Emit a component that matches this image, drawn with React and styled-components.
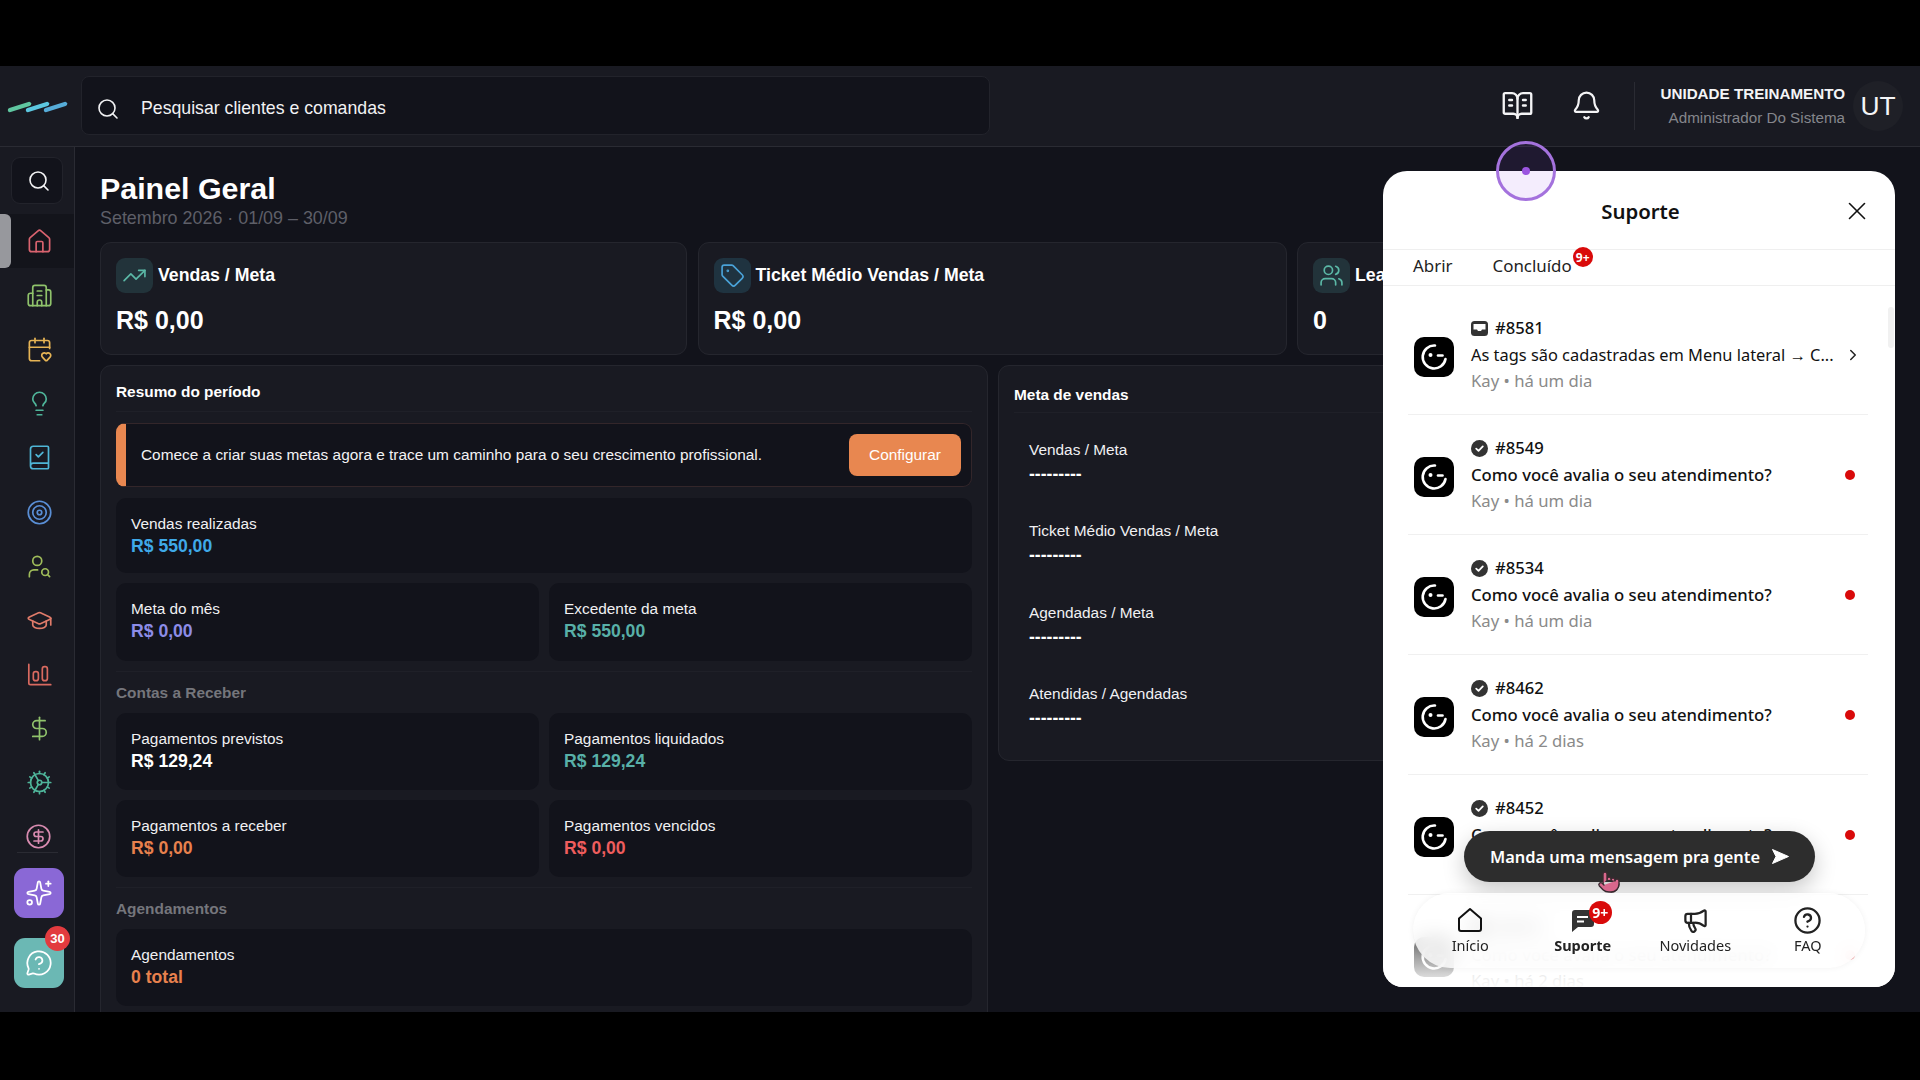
import React from "react";
import styled, { createGlobalStyle } from "styled-components";
import {
  House,
  Building2,
  CalendarHeart,
  Lightbulb,
  BookCheck,
  Target,
  UserSearch,
  GraduationCap,
  DollarSign,
  Cog,
  CircleDollarSign,
  Sparkles,
  MessageCircleQuestion,
  Search,
  BookOpenText,
  Bell,
  TrendingUp,
  Tag,
  Users,
  X,
  ChevronRight,
  Megaphone,
  CircleHelp,
  Pointer,
} from "lucide-react";

const GlobalStyle = createGlobalStyle`
  html, body {
    margin: 0;
    padding: 0;
    height: 100%;
    background: #000;
    overflow: hidden;
    font-family: "Liberation Sans", Arial, sans-serif;
  }
  * { box-sizing: border-box; }
`;

const Frame = styled.div`
  width: 1920px;
  height: 1080px;
  padding: 66px 0 68px;
  background: #000;
  position: relative;
  overflow: hidden;
`;

const Shell = styled.div`
  height: 946px;
  display: flex;
  flex-direction: column;
  background: #12131b;
  color: #f4f4f6;
  overflow: hidden;
`;

const Header = styled.header`
  height: 81px;
  flex: none;
  display: flex;
  align-items: center;
  background: #191a22;
  border-bottom: 1px solid #2a2b33;
`;

const LogoBox = styled.div`
  width: 81px;
  flex: none;
  padding-left: 6px;
  display: flex;
`;

const SearchBar = styled.div`
  width: 909px;
  height: 59px;
  margin-top: -2px;
  display: flex;
  align-items: center;
  gap: 21px;
  padding: 7px 0 0 14px;
  background: #12131b;
  border: 1px solid #22232b;
  border-radius: 8px;
  font-size: 17.7px;
  color: #f2f2f4;
`;

const HeaderActions = styled.div`
  margin-left: auto;
  display: flex;
  align-items: center;
  padding-right: 17px;
`;

const ActionIcon = styled.div`
  width: 69px;
  display: flex;
  justify-content: center;
  margin-top: -2px;
  padding-left: 2px;
  color: #f4f4f6;
`;

const HeaderDivider = styled.div`
  width: 1px;
  height: 48px;
  margin: 0 25px 0 14px;
  background: #2a2b33;
`;

const UserInfo = styled.div`
  text-align: right;
  margin-right: 8px;
`;

const UserName = styled.div`
  font-size: 15.2px;
  font-weight: 700;
  line-height: 24px;
`;

const UserRole = styled.div`
  font-size: 15.2px;
  line-height: 24px;
  color: #85868c;
`;

const Avatar = styled.div`
  width: 50px;
  height: 50px;
  border-radius: 50%;
  background: #1f2027;
  display: flex;
  align-items: center;
  justify-content: center;
  font-size: 26.4px;
`;

const Body = styled.div`
  flex: 1;
  display: flex;
  min-height: 0;
`;

const Sidebar = styled.aside`
  width: 75px;
  flex: none;
  background: #191a22;
  border-right: 1px solid #2a2b33;
  padding-top: 10px;
  display: flex;
  flex-direction: column;
`;

const SideSearch = styled.div`
  width: 52px;
  height: 47px;
  margin: 0 0 10px 11px;
  border-radius: 9px;
  border: 1px solid #22232b;
  background: #12131b;
  display: flex;
  align-items: center;
  justify-content: center;
  padding-left: 4px;
  color: #f4f4f6;
`;

const NavItem = styled.div`
  height: ${(p) => (p.$last ? "43px" : "54.2px")};
  position: relative;
  display: flex;
  align-items: center;
  justify-content: center;
  padding-left: 5px;
  padding-top: ${(p) => (p.$last ? "10px" : "0")};
  color: ${(p) => p.$color};
  background: ${(p) => (p.$active ? "#13141b" : "transparent")};
  ${(p) => (p.$last ? "border-bottom: 1px solid #2a2b33; margin: 0 16px 0 17px; padding-left: 2px;" : "")}
  ${(p) =>
    p.$active
      ? `&::before {
          content: "";
          position: absolute;
          left: 0;
          top: 0;
          bottom: 0;
          width: 11px;
          border-radius: 0 6px 6px 0;
          background: #97989d;
        }`
      : ""}
`;

const SideButton = styled.div`
  width: 50px;
  height: 50px;
  margin: ${(p) => p.$margin};
  position: relative;
  border-radius: 11px;
  background: ${(p) => p.$bg};
  display: flex;
  align-items: center;
  justify-content: center;
  color: #fff;
`;

const CountBadge = styled.span`
  position: absolute;
  top: -12px;
  right: -6px;
  width: 25px;
  height: 25px;
  border-radius: 50%;
  background: #e23b3f;
  color: #fff;
  font-size: 13px;
  font-weight: 700;
  display: flex;
  align-items: center;
  justify-content: center;
`;

const Main = styled.main`
  flex: 1;
  min-width: 0;
  padding: 23px 34px 0 25px;
  overflow: hidden;
`;

const Title = styled.h1`
  margin: 0;
  font-size: 30.4px;
  line-height: 37px;
  font-weight: 700;
  color: #fff;
`;

const Subtitle = styled.div`
  font-size: 17.9px;
  line-height: 22px;
  color: #5e5f68;
  margin-bottom: 13px;
`;

const KpiGrid = styled.div`
  display: grid;
  grid-template-columns: 587px 589px 1fr;
  gap: 10.5px;
  margin-bottom: 10px;
`;

const KpiCard = styled.div`
  height: 113px;
  padding: 15px;
  background: #191a22;
  border: 1px solid #25262e;
  border-radius: 11px;
`;

const KpiHead = styled.div`
  display: flex;
  align-items: center;
  gap: 5px;
  font-size: 17.7px;
  font-weight: 700;
  color: #fff;
`;

const KpiIcon = styled.div`
  width: 37px;
  height: 35px;
  border-radius: 9px;
  display: flex;
  align-items: center;
  justify-content: center;
  background: ${(p) => p.$bg};
  color: ${(p) => p.$color};
`;

const KpiValue = styled.div`
  margin-top: 12px;
  font-size: 25px;
  line-height: 30px;
  font-weight: 700;
  color: #fff;
`;

const Columns = styled.div`
  display: grid;
  grid-template-columns: 1fr 1fr;
  gap: 10px;
  align-items: start;
`;

const Panel = styled.section`
  padding: 0 15px;
  background: #191a22;
  border: 1px solid #25262e;
  border-radius: 11px;
`;

const LeftPanel = styled(Panel)`
  height: 720px;
`;

const MetaPanel = styled(Panel)`
  height: 396px;
`;

const PanelTitle = styled.div`
  padding: ${(p) => (p.$low ? "19px 0 7px" : "16px 0 9px")};
  font-size: 15.4px;
  line-height: 20px;
  font-weight: 700;
  color: #fff;
  border-bottom: 1px solid #1f2028;
`;

const Banner = styled.div`
  height: 64px;
  margin: 11px 0;
  display: flex;
  align-items: center;
  justify-content: space-between;
  padding: 0 10px 0 15px;
  background: #12131b;
  border: 1px solid #33262a;
  border-left: 10px solid #e88750;
  border-radius: 9px;
  font-size: 15.4px;
  color: #f2f2f4;
`;

const ConfigButton = styled.div`
  width: 112px;
  height: 42px;
  border-radius: 8px;
  background: #e88750;
  color: #fff;
  font-size: 15.4px;
  display: flex;
  align-items: center;
  justify-content: center;
`;

const StatRow = styled.div`
  display: grid;
  grid-template-columns: ${(p) => (p.$single ? "1fr" : "1fr 1fr")};
  gap: 10px;
  margin-bottom: 10px;
`;

const StatCard = styled.div`
  height: ${(p) => p.$height || "77px"};
  padding: 14px 15px 0;
  background: #12131b;
  border-radius: 10px;
`;

const StatLabel = styled.div`
  font-size: 15.4px;
  line-height: 23px;
  color: #f0f0f2;
`;

const StatValue = styled.div`
  font-size: 17.6px;
  line-height: 23px;
  font-weight: 700;
  color: ${(p) => p.$color};
`;

const SectionLabel = styled.div`
  padding: 10px 0 10px;
  border-top: 1px solid #1f2028;
  font-size: 15.4px;
  line-height: 21px;
  font-weight: 700;
  color: #75767c;
`;

const MetaList = styled.div`
  padding: 26px 0 0 15px;
`;

const MetaItem = styled.div`
  height: 81.4px;
  font-size: 15.4px;
  line-height: 22px;
  color: #f0f0f2;
`;

const MetaDashes = styled.div`
  font-size: 17.6px;
  line-height: 26px;
  font-weight: 700;
  color: #fff;
`;

const Widget = styled.div`
  position: absolute;
  left: 1383px;
  top: 171px;
  width: 512px;
  height: 816px;
  background: #fff;
  border-radius: 24px 24px 20px 20px;
  overflow: hidden;
  color: #111;
  font-family: "Noto Sans", "Open Sans", sans-serif;
`;

const WidgetHead = styled.div`
  height: 79px;
  display: flex;
  align-items: center;
  justify-content: center;
  position: relative;
  padding: 2px 0 0 3px;
  font-size: 20.4px;
  font-weight: 600;
  border-bottom: 1px solid #efefef;
`;

const CloseIcon = styled.div`
  position: absolute;
  right: 23px;
  top: 25px;
  display: flex;
  color: #111;
`;

const Tabs = styled.div`
  height: 36px;
  display: flex;
  align-items: center;
  padding: 0 0 4px 30px;
  gap: 40px;
  font-size: 16.9px;
  color: #222;
  border-bottom: 1px solid #efefef;
`;

const TabLabel = styled.span`
  position: relative;
`;

const RedBadge = styled.span`
  position: absolute;
  width: ${(p) => p.$size}px;
  height: ${(p) => p.$size}px;
  right: ${(p) => p.$right}px;
  top: ${(p) => p.$top}px;
  border-radius: 50%;
  background: #d90a0a;
  color: #fff;
  font-size: ${(p) => p.$font}px;
  font-weight: 700;
  display: flex;
  align-items: center;
  justify-content: center;
`;

const TicketList = styled.div`
  padding: 9px 27px 0 25px;
`;

const TicketRow = styled.div`
  height: 120px;
  display: flex;
  align-items: center;
  padding: 0 13px 0 6px;
  border-bottom: 1px solid #f0f0f0;
`;

const TicketLogo = styled.svg`
  flex: none;
  width: 40px;
  height: 40px;
  margin-top: 5px;
`;

const TicketText = styled.div`
  flex: 1;
  min-width: 0;
  margin-left: 17px;
  padding-top: 1px;
`;

const TicketId = styled.div`
  display: flex;
  align-items: center;
  gap: 7px;
  font-size: 16.6px;
  line-height: 26.5px;
  font-weight: 500;
  color: #111;
`;

const TicketTitle = styled.div`
  font-size: ${(p) => (p.$unread ? "16.7px" : "16.4px")};
  line-height: 26.5px;
  font-weight: ${(p) => (p.$unread ? 500 : 400)};
  color: #111;
  white-space: nowrap;
`;

const TicketMeta = styled.div`
  font-size: 16.7px;
  line-height: 26.5px;
  color: #8a8a8a;
`;

const UnreadDot = styled.span`
  flex: none;
  width: 10px;
  height: 10px;
  border-radius: 50%;
  background: #d90a0a;
`;

const Chevron = styled.div`
  flex: none;
  display: flex;
  margin-right: -7px;
  color: #222;
`;

const Scrollbar = styled.div`
  position: absolute;
  right: 1px;
  top: 136px;
  width: 6px;
  height: 41px;
  border-radius: 3px;
  background: #f1f1f1;
`;

const BottomFade = styled.div`
  position: absolute;
  left: 0;
  right: 0;
  bottom: 0;
  height: 60px;
  background: linear-gradient(to bottom, rgba(255, 255, 255, 0.3), rgba(255, 255, 255, 0.97));
`;

const MessagePill = styled.div`
  position: absolute;
  left: 81px;
  top: 660px;
  width: 351px;
  height: 51px;
  border-radius: 26px;
  background: #2d2d2d;
  color: #fff;
  font-size: 16.4px;
  font-weight: 600;
  display: flex;
  align-items: center;
  justify-content: center;
  gap: 12px;
  box-shadow: 0 8px 22px rgba(0, 0, 0, 0.22);
`;

const BottomNav = styled.div`
  position: absolute;
  left: 30px;
  top: 722px;
  width: 452px;
  height: 75px;
  border-radius: 38px;
  display: grid;
  grid-template-columns: repeat(4, 1fr);
  padding: 0 1px;
  background: rgba(255, 255, 255, 0.78);
  backdrop-filter: blur(10px);
  box-shadow: 0 0 6px rgba(0, 0, 0, 0.06);
`;

const BottomTab = styled.div`
  display: flex;
  flex-direction: column;
  align-items: center;
  padding-top: 13px;
  font-size: 14.5px;
  line-height: 22px;
  font-weight: ${(p) => (p.$active ? 700 : 400)};
  color: #222;
`;

const BottomIcon = styled.div`
  position: relative;
  height: 28px;
  display: flex;
  align-items: center;
  justify-content: center;
`;

const ClickRing = styled.div`
  position: absolute;
  left: 1496px;
  top: 141px;
  width: 60px;
  height: 60px;
  border-radius: 50%;
  border: 3px solid #a472dd;
  background: rgba(150, 80, 240, 0.1);
  display: flex;
  align-items: center;
  justify-content: center;

  &::after {
    content: "";
    width: 8px;
    height: 8px;
    border-radius: 50%;
    background: #9b55e0;
  }
`;

const HandCursor = styled.div`
  position: absolute;
  left: 1597px;
  top: 870px;
  display: flex;
`;

const BarsIcon = ({ size, strokeWidth }) => (
  <svg width={size} height={size} viewBox="0 0 24 24" fill="none" stroke="currentColor" strokeWidth={strokeWidth} strokeLinecap="round" strokeLinejoin="round">
    <path d="M2.5 3 V19.5 a1.5 1.5 0 0 0 1.5 1.5 H22" />
    <rect x="6.5" y="9.5" width="4.5" height="8" rx="2" />
    <rect x="14.5" y="5" width="4.5" height="12.5" rx="2" />
  </svg>
);

const navIcons = [
  { name: "home", Icon: House, color: "#d9636f", active: true },
  { name: "units", Icon: Building2, color: "#8fc26b" },
  { name: "agenda", Icon: CalendarHeart, color: "#e6b455" },
  { name: "ideas", Icon: Lightbulb, color: "#4fb59a" },
  { name: "book", Icon: BookCheck, color: "#4fb6d6" },
  { name: "goals", Icon: Target, color: "#5a8fd6" },
  { name: "clients", Icon: UserSearch, color: "#9fbc5a" },
  { name: "training", Icon: GraduationCap, color: "#e07b6a" },
  { name: "reports", Icon: BarsIcon, color: "#d96a60" },
  { name: "finance", Icon: DollarSign, color: "#8fc26b" },
  { name: "settings", Icon: Cog, color: "#4fb59a" },
  { name: "billing", Icon: CircleDollarSign, color: "#d88bb0", last: true },
];

const kpis = [
  { Icon: TrendingUp, color: "#5bb8a6", bg: "#22333a", title: "Vendas / Meta", value: "R$ 0,00" },
  { Icon: Tag, color: "#4aa3d8", bg: "#1f3340", title: "Ticket Médio Vendas / Meta", value: "R$ 0,00" },
  { Icon: Users, color: "#5bb8a6", bg: "#22333a", title: "Leads / Meta", value: "0" },
];

const metas = ["Vendas / Meta", "Ticket Médio Vendas / Meta", "Agendadas / Meta", "Atendidas / Agendadas"];

const tickets = [
  { id: "#8581", title: "As tags são cadastradas em Menu lateral → C...", meta: "Kay • há um dia", open: true },
  { id: "#8549", title: "Como você avalia o seu atendimento?", meta: "Kay • há um dia" },
  { id: "#8534", title: "Como você avalia o seu atendimento?", meta: "Kay • há um dia" },
  { id: "#8462", title: "Como você avalia o seu atendimento?", meta: "Kay • há 2 dias" },
  { id: "#8452", title: "Como você avalia o seu atendimento?", meta: "Kay • há 2 dias" },
  { id: "#8441", title: "Como você avalia o seu atendimento?", meta: "Kay • há 2 dias" },
];

const Logo = () => (
  <svg width="62" height="16" viewBox="0 0 62 16">
    <g strokeWidth="4.4" strokeLinecap="round">
      <path d="M4 12 L23 6" stroke="#5fc6a0" />
      <path d="M22 12 L41 6" stroke="#5cc7e0" />
      <path d="M40 12 L59 6" stroke="#56acd8" />
    </g>
  </svg>
);

const KayLogo = () => (
  <TicketLogo viewBox="0 0 40 40">
    <rect width="40" height="40" rx="10" fill="#000" />
    <path d="M21 8.5 A11.5 11.5 0 1 0 31.5 22" fill="none" stroke="#fff" strokeWidth="2.6" strokeLinecap="round" />
    <circle cx="16.5" cy="18" r="2" fill="#fff" />
    <path d="M24 18.5 H28.5" stroke="#fff" strokeWidth="2.6" strokeLinecap="round" />
  </TicketLogo>
);

const InboxGlyph = () => (
  <svg width="17" height="15" viewBox="0 0 17 15">
    <rect x="0" y="0" width="17" height="15" rx="3.5" fill="#333" />
    <path d="M2.5 3 H14.5 V8.5 H11 L10 10 H7 L6 8.5 H2.5 Z" fill="#fff" />
  </svg>
);

const CheckGlyph = () => (
  <svg width="17" height="17" viewBox="0 0 17 17">
    <circle cx="8.5" cy="8.5" r="8.5" fill="#333" />
    <path d="M5.2 8.7 L7.5 10.8 L11.8 6.4" fill="none" stroke="#fff" strokeWidth="1.8" strokeLinecap="round" strokeLinejoin="round" />
  </svg>
);

const HomeGlyph = () => (
  <svg width="26" height="26" viewBox="0 0 26 26">
    <path d="M2 11.5 L13 2 L24 11.5 V22 a2 2 0 0 1 -2 2 H4 a2 2 0 0 1 -2 -2 Z" fill="none" stroke="#111" strokeWidth="2" strokeLinejoin="round" />
  </svg>
);

const ChatGlyph = () => (
  <svg width="24" height="26" viewBox="0 0 24 26">
    <path d="M4 3 H20 a3 3 0 0 1 3 3 V17 a3 3 0 0 1 -3 3 H7 L1 25 V6 a3 3 0 0 1 3 -3 Z" fill="#333" />
    <path d="M6 10 H17 M6 14.5 H13" stroke="#fff" strokeWidth="2" />
  </svg>
);

const SendGlyph = () => (
  <svg width="17" height="15" viewBox="0 0 17 15">
    <path d="M0.5 0.5 L16.5 7.5 L0.5 14.5 L4 7.5 Z" fill="#fff" stroke="#fff" strokeWidth="1" strokeLinejoin="round" />
  </svg>
);

const App = () => (
  <>
    <GlobalStyle />
    <Frame>
      <Shell>
        <Header>
          <LogoBox>
            <Logo />
          </LogoBox>
          <SearchBar>
            <Search size={24} strokeWidth={1.6} />
            Pesquisar clientes e comandas
          </SearchBar>
          <HeaderActions>
            <ActionIcon>
              <BookOpenText size={33} strokeWidth={1.7} />
            </ActionIcon>
            <ActionIcon>
              <Bell size={31} strokeWidth={1.7} />
            </ActionIcon>
            <HeaderDivider />
            <UserInfo>
              <UserName>UNIDADE TREINAMENTO</UserName>
              <UserRole>Administrador Do Sistema</UserRole>
            </UserInfo>
            <Avatar>UT</Avatar>
          </HeaderActions>
        </Header>
        <Body>
          <Sidebar>
            <SideSearch>
              <Search size={24} strokeWidth={1.6} />
            </SideSearch>
            {navIcons.map(({ name, Icon, color, active, last }) => (
              <NavItem key={name} $color={color} $active={active} $last={last}>
                <Icon size={27} strokeWidth={1.5} />
              </NavItem>
            ))}
            <SideButton $bg="#8a68d6" $margin="15px 0 0 14px">
              <Sparkles size={28} strokeWidth={1.5} />
            </SideButton>
            <SideButton $bg="#6bb8b4" $margin="20px 0 0 14px">
              <MessageCircleQuestion size={28} strokeWidth={1.5} />
              <CountBadge>30</CountBadge>
            </SideButton>
          </Sidebar>
          <Main>
            <Title>Painel Geral</Title>
            <Subtitle>Setembro 2026 · 01/09 – 30/09</Subtitle>
            <KpiGrid>
              {kpis.map(({ Icon, color, bg, title, value }) => (
                <KpiCard key={title}>
                  <KpiHead>
                    <KpiIcon $bg={bg} $color={color}>
                      <Icon size={25} strokeWidth={1.6} />
                    </KpiIcon>
                    {title}
                  </KpiHead>
                  <KpiValue>{value}</KpiValue>
                </KpiCard>
              ))}
            </KpiGrid>
            <Columns>
              <LeftPanel>
                <PanelTitle>Resumo do período</PanelTitle>
                <Banner>
                  Comece a criar suas metas agora e trace um caminho para o seu crescimento profissional.
                  <ConfigButton>Configurar</ConfigButton>
                </Banner>
                <StatRow $single>
                  <StatCard $height="75px">
                    <StatLabel>Vendas realizadas</StatLabel>
                    <StatValue $color="#3fa9e8">R$ 550,00</StatValue>
                  </StatCard>
                </StatRow>
                <StatRow>
                  <StatCard $height="78px">
                    <StatLabel>Meta do mês</StatLabel>
                    <StatValue $color="#8c8ce8">R$ 0,00</StatValue>
                  </StatCard>
                  <StatCard $height="78px">
                    <StatLabel>Excedente da meta</StatLabel>
                    <StatValue $color="#58b0a8">R$ 550,00</StatValue>
                  </StatCard>
                </StatRow>
                <SectionLabel>Contas a Receber</SectionLabel>
                <StatRow>
                  <StatCard>
                    <StatLabel>Pagamentos previstos</StatLabel>
                    <StatValue $color="#fff">R$ 129,24</StatValue>
                  </StatCard>
                  <StatCard>
                    <StatLabel>Pagamentos liquidados</StatLabel>
                    <StatValue $color="#58b0a8">R$ 129,24</StatValue>
                  </StatCard>
                </StatRow>
                <StatRow>
                  <StatCard>
                    <StatLabel>Pagamentos a receber</StatLabel>
                    <StatValue $color="#e8814d">R$ 0,00</StatValue>
                  </StatCard>
                  <StatCard>
                    <StatLabel>Pagamentos vencidos</StatLabel>
                    <StatValue $color="#ef5d5d">R$ 0,00</StatValue>
                  </StatCard>
                </StatRow>
                <SectionLabel>Agendamentos</SectionLabel>
                <StatRow $single>
                  <StatCard>
                    <StatLabel>Agendamentos</StatLabel>
                    <StatValue $color="#e8814d">0 total</StatValue>
                  </StatCard>
                </StatRow>
              </LeftPanel>
              <MetaPanel>
                <PanelTitle $low>Meta de vendas</PanelTitle>
                <MetaList>
                  {metas.map((label) => (
                    <MetaItem key={label}>
                      {label}
                      <MetaDashes>---------</MetaDashes>
                    </MetaItem>
                  ))}
                </MetaList>
              </MetaPanel>
            </Columns>
          </Main>
        </Body>
      </Shell>

      <Widget>
        <WidgetHead>
          Suporte
          <CloseIcon>
            <X size={30} strokeWidth={1.3} />
          </CloseIcon>
        </WidgetHead>
        <Tabs>
          <span>Abrir</span>
          <TabLabel>
            Concluído
            <RedBadge $size={20} $right={-21} $top={-7} $font={12}>
              9+
            </RedBadge>
          </TabLabel>
        </Tabs>
        <TicketList>
          {tickets.map((t) => (
            <TicketRow key={t.id}>
              <KayLogo />
              <TicketText>
                <TicketId>
                  {t.open ? <InboxGlyph /> : <CheckGlyph />}
                  {t.id}
                </TicketId>
                <TicketTitle $unread={!t.open}>{t.title}</TicketTitle>
                <TicketMeta>{t.meta}</TicketMeta>
              </TicketText>
              {t.open ? (
                <Chevron>
                  <ChevronRight size={18} strokeWidth={2} />
                </Chevron>
              ) : (
                <UnreadDot />
              )}
            </TicketRow>
          ))}
        </TicketList>
        <Scrollbar />
        <BottomFade />
        <MessagePill>
          Manda uma mensagem pra gente
          <SendGlyph />
        </MessagePill>
        <BottomNav>
          <BottomTab>
            <BottomIcon>
              <HomeGlyph />
            </BottomIcon>
            Início
          </BottomTab>
          <BottomTab $active>
            <BottomIcon>
              <ChatGlyph />
              <RedBadge $size={23} $right={-17} $top={-5} $font={14}>
                9+
              </RedBadge>
            </BottomIcon>
            Suporte
          </BottomTab>
          <BottomTab>
            <BottomIcon>
              <Megaphone size={27} strokeWidth={2} />
            </BottomIcon>
            Novidades
          </BottomTab>
          <BottomTab>
            <BottomIcon>
              <CircleHelp size={29} strokeWidth={1.9} />
            </BottomIcon>
            FAQ
          </BottomTab>
        </BottomNav>
      </Widget>

      <ClickRing />
      <HandCursor>
        <Pointer size={24} fill="#d9678c" color="#3a2a30" strokeWidth={1.4} />
      </HandCursor>
    </Frame>
  </>
);

export default App;
